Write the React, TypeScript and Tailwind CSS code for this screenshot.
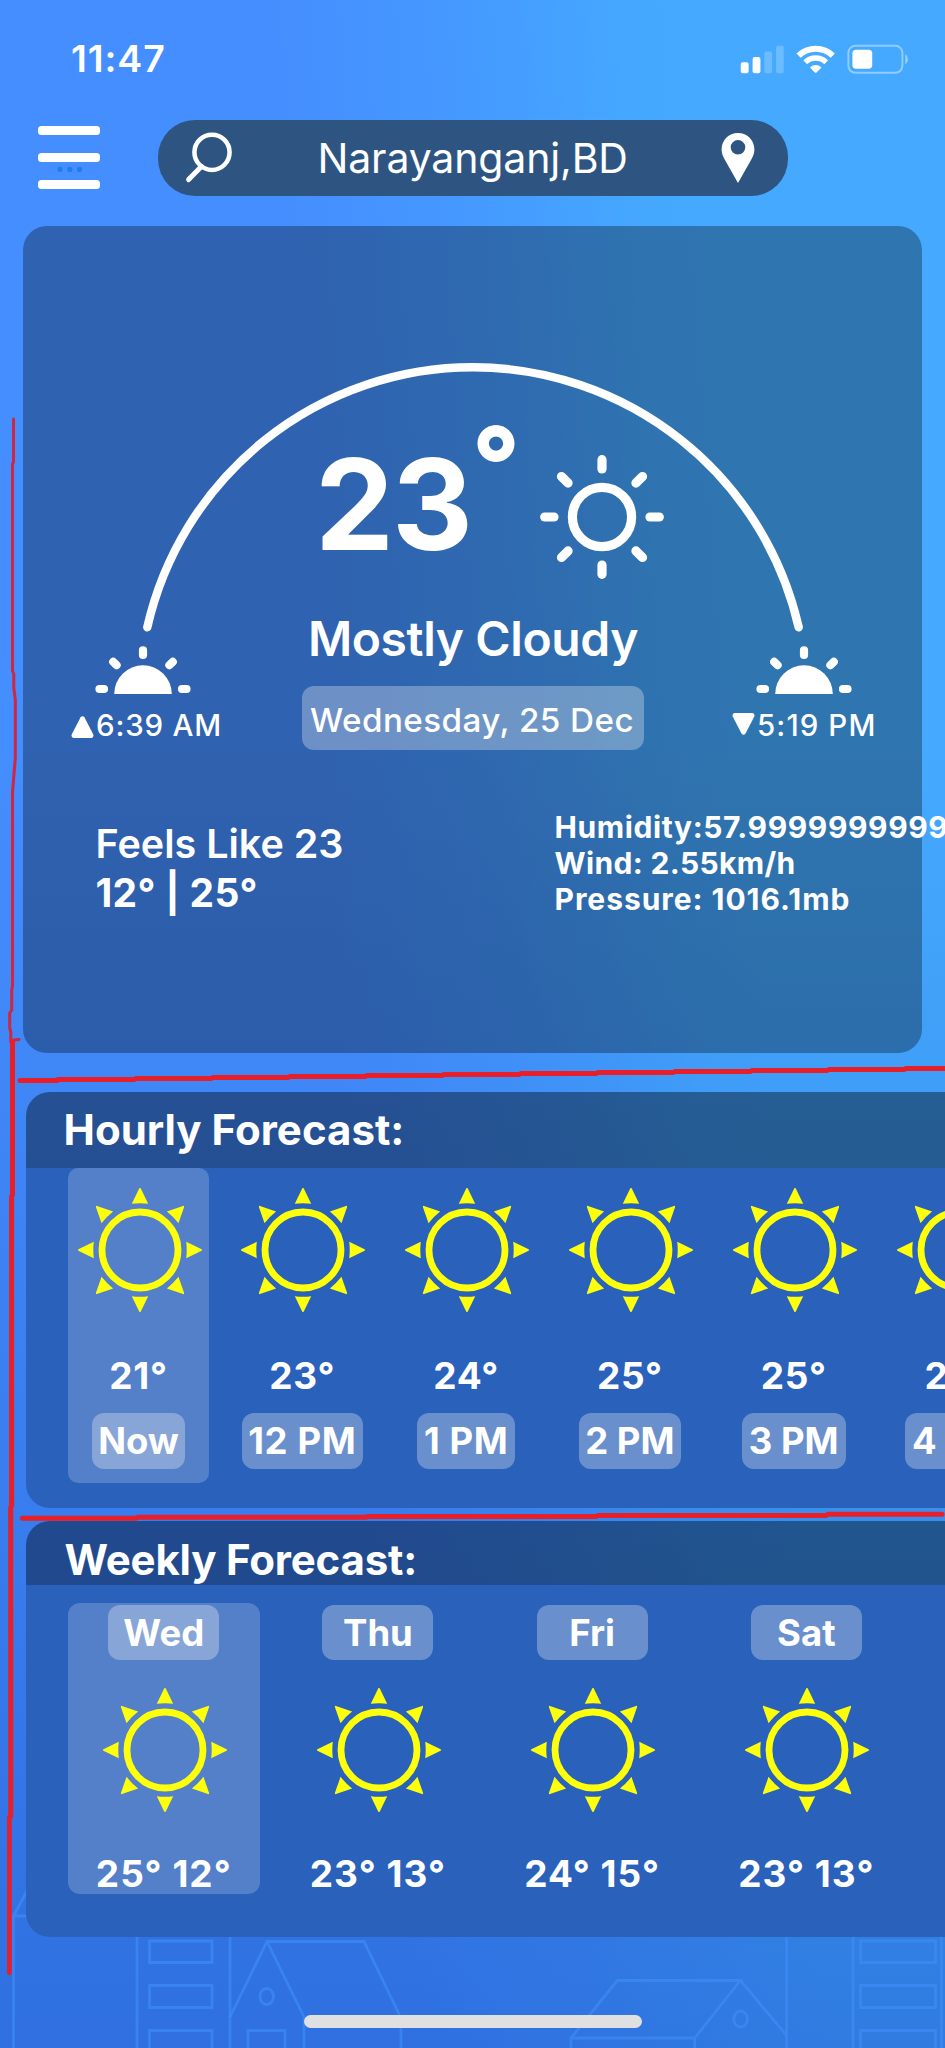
import React from "react";

const hours = [
  { temp: "21°", label: "Now", chip: "w-[93px]", active: true },
  { temp: "23°", label: "12 PM", chip: "w-[121px] tracking-[0.6px]" },
  { temp: "24°", label: "1 PM", chip: "w-[98px] tracking-[0.6px]" },
  { temp: "25°", label: "2 PM", chip: "w-[102px]" },
  { temp: "25°", label: "3 PM", chip: "w-[104px]" },
  { temp: "25°", label: "4 PM", chip: "w-[104px]" },
];

const days = [
  { day: "Wed", temps: "25° 12°", active: true },
  { day: "Thu", temps: "23° 13°" },
  { day: "Fri", temps: "24° 15°" },
  { day: "Sat", temps: "23° 13°" },
];

const ANGLES = [0, 45, 90, 135, 180, 225, 270, 315];

function SunIcon() {
  return (
    <svg className="h-[124px] w-[124px]" viewBox="-62 -62 124 124" fill="#fdff0b">
      <circle r="38" fill="none" stroke="#fdff0b" strokeWidth="6.800" />
      {ANGLES.map((a) => (
        <path key={a} d="M-.8 -61.6Q0 -62.6 .8 -61.6L8.2 -46.2Q0 -47.2 -8.2 -46.2Z" transform={`rotate(${a})`} />
      ))}
    </svg>
  );
}

function WeatherSun() {
  return (
    <svg className="h-[124px] w-[124px]" viewBox="-62 -62 124 124" fill="none" stroke="#fff" strokeWidth="9.2" strokeLinecap="round">
      <circle r="29.6" />
      {ANGLES.map((a) => (
        <path key={a} d="M0 -57.3V-48" transform={`rotate(${a})`} />
      ))}
    </svg>
  );
}

function HalfSun() {
  return (
    <svg className="h-[48px] w-[96px] shrink-0" viewBox="-48 -48 96 48" stroke="#fff" strokeWidth="8.2" strokeLinecap="round" fill="#fff">
      <path d="M-28.8 0A28.8 28.8 0 0 1 28.8 0Z" stroke="none" />
      <path d="M0 -43.6V-39M-43.5 -5H-39M43.5 -5H39M-29.8 -32.2L-26.4 -28.8M29.8 -32.2L26.4 -28.8" />
    </svg>
  );
}

function StatusBar() {
  return (
    <div className="flex h-[117px] items-center justify-between pl-[71px] pr-[36px]">
      <span className="text-[37.5px] leading-none font-semibold tracking-[0.9px]">11:47</span>
      <svg className="h-[30px] w-[170px]" viewBox="739 43 170 30" fill="#fff">
        <rect x="740.8" y="61.3" width="7.8" height="10.9" rx="2" />
        <rect x="752.6" y="56" width="7.8" height="16.2" rx="2" />
        <g opacity=".2">
          <rect x="764.3" y="50.6" width="7.8" height="21.6" rx="2" />
          <rect x="776" y="44.8" width="7.8" height="27.4" rx="2" />
        </g>
        <g fill="none" stroke="#fff">
          <path d="M798.6 54.6A24.8 24.8 0 0 1 832.8 54.6" strokeWidth="6" />
          <path d="M805.2 61.2A15.2 15.2 0 0 1 826.2 61.2" strokeWidth="5.4" />
        </g>
        <path d="M810 66.4A8.2 8.2 0 0 1 821.4 66.4L816.6 71.4Q815.7 72.2 814.8 71.4Z" />
        <rect x="848.4" y="44.8" width="54" height="27" rx="7" fill="none" stroke="#fff" strokeOpacity=".4" strokeWidth="2" />
        <rect x="852.4" y="48.7" width="19.8" height="19" rx="3.6" />
        <path d="M905.3 53A6.4 6.4 0 0 1 905.3 63.4Z" opacity=".45" />
      </svg>
    </div>
  );
}

function SearchRow() {
  return (
    <div className="mt-[3px] flex h-[76px] items-center pl-[38px]">
      <svg className="mb-[1.500px] h-[63px] w-[62px]" viewBox="0 0 62 63" fill="#fff">
        <rect y="0" width="62" height="9" rx="3.5" />
        <rect y="27" width="62" height="9" rx="3.5" />
        <rect y="54" width="62" height="9" rx="3.5" />
        <g fill="#1f7df2">
          <circle cx="22" cy="43.4" r="2.6" />
          <circle cx="31.8" cy="43.4" r="2.6" />
          <circle cx="41.6" cy="43.4" r="2.6" />
        </g>
      </svg>
      <div className="ml-[58px] flex h-[76px] w-[630px] items-center rounded-[37px] bg-[#2e5581]">
        <svg className="ml-[27px] h-[52px] w-[50px]" viewBox="185 132 50 52" fill="none" stroke="#fff" strokeLinecap="round">
          <circle cx="212" cy="152.3" r="17.6" strokeWidth="4.5" />
          <path d="M201.4 166.4L188.6 179.6" strokeWidth="5" />
        </svg>
        <span className="ml-[82.500px] w-[330px] whitespace-nowrap text-[41px] leading-none font-normal tracking-[-0.150px]">Narayanganj,BD</span>
        <svg className="ml-[73.500px] h-[50px] w-[34px] shrink-0" viewBox="0 0 34 50" fill="#fff" fillRule="evenodd">
          <path d="M17 0C7.600 0 .6 7.400 .6 16.400C.6 20 1.800 23 3.400 26L17 50L30.600 26C32.200 23 33.400 20 33.400 16.400C33.400 7.400 26.400 0 17 0ZM17 7A7.300 7.300 0 1 1 17 21.600A7.300 7.300 0 1 1 17 7Z" />
        </svg>
      </div>
    </div>
  );
}

function CurrentCard() {
  return (
    <div className="relative ml-[23px] mt-[30px] flex h-[827px] w-[899px] flex-col rounded-[24px] bg-black/31">
      <svg className="absolute left-0 top-0 h-[827px] w-[899px]" viewBox="23 226 899 827" fill="none" stroke="#fff">
        <path d="M147.300 627.300A334 334 0 0 1 798.700 627.300" strokeWidth="8.400" strokeLinecap="round" />
      </svg>

      <div className="mt-[199px] flex h-[155px] items-start pl-[292px]">
        <span className="mt-[33px] w-[155px] text-[125.500px] leading-[92px] font-bold tracking-[-2px]">23</span>
        <span className="mt-[-8px] w-[52px] text-center text-[104px] leading-[92px] font-extrabold">°</span>
        <div className="ml-[18px] mt-[29.700px]"><WeatherSun /></div>
      </div>

      <div className="relative mt-[30px] flex h-[141px] justify-between pl-[46px] pr-[43px]">
        <div className="flex w-[154px] flex-col items-center pt-[36px]">
          <div className="mr-[7px] flex"><HalfSun /></div>
          <div className="mt-[15px] flex w-full items-center leading-[32px]">
            <svg className="ml-[2px] mt-[3px] h-[22px] w-[23px]" viewBox="0 0 23 22" fill="#fff">
              <path d="M9.600 1.200Q11.500 -.6 13.400 1.200L22.300 18.600Q23 21.600 20.500 22H2.500Q0 21.600 .7 18.600Z" />
            </svg>
            <span className="ml-[2px] whitespace-nowrap text-[29.500px] font-medium tracking-[0.800px]">6:39 AM</span>
          </div>
        </div>
        <div className="mr-[8px] flex w-[342px] flex-col items-center">
          <span className="whitespace-nowrap text-[48px] leading-[58px] font-semibold tracking-[-0.400px]">Mostly Cloudy</span>
          <span className="mt-[18px] flex h-[64px] w-[342px] items-center justify-center whitespace-nowrap rounded-[12px] bg-[#fffdf8]/30 pr-[2px] pt-[5px] text-[33.200px] font-medium tracking-[0.450px]">Wednesday, 25 Dec</span>
        </div>
        <div className="flex w-[148px] flex-col items-center pt-[36px]">
          <div className="mr-[3px] flex"><HalfSun /></div>
          <div className="mt-[15px] flex w-full items-center leading-[32px]">
            <svg className="mb-[2px] ml-[1px] h-[22px] w-[23px]" viewBox="0 0 23 22" fill="#fff">
              <path d="M9.600 20.800Q11.500 22.600 13.400 20.800L22.300 3.400Q23 .4 20.500 0H2.500Q0 .4 .7 3.400Z" />
            </svg>
            <span className="ml-[2px] whitespace-nowrap text-[29.500px] font-medium tracking-[1.100px]">5:19 PM</span>
          </div>
        </div>
      </div>

      <div className="mt-[56px] flex justify-between pl-[72.500px] pr-[67.500px]">
        <div className="flex flex-col pt-[13px]">
          <span className="whitespace-nowrap text-[39.500px] leading-[49px] font-semibold">Feels Like 23</span>
          <span className="whitespace-nowrap text-[39px] leading-[48px] font-bold tracking-[0.300px]">12° | 25°</span>
        </div>
        <div className="flex w-[300px] flex-col whitespace-nowrap pt-[1.500px] text-[30px] leading-[36px] font-bold tracking-[0.600px]">
          <span>Humidity:57.99999999999999</span>
          <span className="tracking-[0.350px]">Wind: 2.55km/h</span>
          <span className="tracking-[0.950px]">Pressure: 1016.1mb</span>
        </div>
      </div>
    </div>
  );
}

function HourlyPanel() {
  return (
    <div className="ml-[25.500px] mt-[39px] h-[416px] w-[1100px] overflow-hidden rounded-[24px]">
      <div className="flex h-[76px] items-center bg-black/40 pl-[38px]">
        <span className="whitespace-nowrap text-[42px] leading-none font-bold">Hourly Forecast:</span>
      </div>
      <div className="flex h-[340px] gap-[22.800px] bg-[#2961bb] pl-[42.500px]">
        {hours.map((h, i) => (
          <div key={i} className={`flex h-[315px] w-[141px] shrink-0 flex-col items-center rounded-[10px] ${h.active ? "bg-white/20" : ""}`}>
            <div className="ml-[2.400px] mt-[20.300px] flex"><SunIcon /></div>
            <span className="mt-[42px] text-[37px] leading-[44px] font-bold tracking-[0.700px]">{h.temp}</span>
            <span className={`mt-[15px] flex h-[56px] items-center justify-center whitespace-nowrap rounded-[12px] bg-[#fffdf8]/30 text-[36.500px] font-bold ${h.chip}`}>{h.label}</span>
          </div>
        ))}
      </div>
    </div>
  );
}

function WeeklyPanel() {
  return (
    <div className="ml-[25.500px] mt-[13px] h-[415.600px] w-[1100px] overflow-hidden rounded-[24px]">
      <div className="flex h-[63.600px] items-center bg-black/40 pl-[39px] pt-[14px]">
        <span className="whitespace-nowrap text-[42px] leading-none font-bold tracking-[-0.200px]">Weekly Forecast:</span>
      </div>
      <div className="flex h-[352px] gap-[22.700px] bg-[#2961bb] pl-[42.500px] pt-[18px]">
        {days.map((d, i) => (
          <div key={i} className={`flex h-[291.500px] w-[191.500px] shrink-0 flex-col items-center rounded-[12px] ${d.active ? "bg-white/20" : ""}`}>
            <span className="mt-[2.500px] flex h-[55px] w-[111px] items-center justify-center rounded-[12px] bg-[#fffdf8]/30 pt-[1px] text-[36.500px] font-bold">{d.day}</span>
            <div className="ml-[2px] mt-[28px] flex"><SunIcon /></div>
            <span className="mt-[40px] whitespace-nowrap text-[37px] leading-[44px] font-bold tracking-[1px]">{d.temps}</span>
          </div>
        ))}
      </div>
    </div>
  );
}

function Skyline() {
  return (
    <svg className="absolute bottom-0 left-0 h-[188px] w-[945px]" viewBox="0 1860 945 188" fill="none" stroke="#3d8cf5" strokeOpacity=".7" strokeWidth="2.800">
      <path d="M13.500 2048V1916H26M13.500 1916L27 1891" />
      <path d="M137 1910V2048M230 1910V2048" />
      <path d="M149.500 1941H212V1962.500H149.500ZM149.500 1985.500H212V2007.500H149.500ZM149.500 2060V2030.500H212V2060" />
      <path d="M230 2017L267 1941.500H364L399.500 2015M267 1941.500L304 2017V2048M401 2015V2048M248 2060V2030.500H285V2060" />
      <ellipse cx="266.700" cy="1996.500" rx="6.800" ry="8" />
      <path d="M571 2048V2038L617.300 1980.500H740.500L694.700 2038H571M694.700 2038V2048M740.500 1980.500L786.700 2035.500M786.700 1910V2048" />
      <ellipse cx="740.600" cy="2019" rx="6.800" ry="8" />
      <path d="M853 1910V2048M941.500 1910V2048" />
      <path d="M860.500 1941H935.500V1962.500H860.500ZM860.500 1985.500H935.500V2007.500H860.500ZM860.500 2060V2030.500H935.500V2060" />
    </svg>
  );
}

function Markup() {
  return (
    <svg className="pointer-events-none absolute left-0 top-0 h-[2048px] w-[945px]" viewBox="0 0 945 2048" fill="none" stroke="#e81e28" strokeLinecap="round" strokeLinejoin="round">
      <path stroke="#d0263f" strokeWidth="3" d="M13.500 419V462L12.500 464V671L13.800 674V688L15.300 700V758L14 774L12.500 792V986L11.700 990V1010L9.700 1013V1028L10.800 1032V1042L14 1040L19 1039.500" />
      <path strokeWidth="5" strokeLinecap="butt" d="M12.500 1040V1196M11.600 1195V1507M10.700 1506V1818" />
      <path strokeWidth="4.600" d="M9.400 1817V1973" />
      <path strokeWidth="5" d="M20 1080.400H57M58 1079.500H134M136 1078.500H211M213 1077.600H288M290 1076.500H365M367 1075.500H442M444 1074.400H519M521 1073.500H596M598 1072.500H673M675 1071.500H750M752 1070.500H827M829 1069.500H904M906 1068.500H945" />
      <path strokeWidth="5" d="M22.500 1518.200H136M138 1517.300H366M368 1516.400H596M598 1515.400H826M828 1514.300H942" />
    </svg>
  );
}

export default function App() {
  return (
    <div className="relative h-[2048px] w-[945px] overflow-hidden bg-[linear-gradient(to_bottom,rgba(32,90,203,0)_36%,rgba(32,90,203,0.160)_54%,rgba(32,90,203,0.350)_75%,rgba(32,90,203,0.580)_100%),linear-gradient(86deg,#458eff_0%,#458eff_38%,#4599ff_55%,#45a7ff_70%,#45aaff_77%)] font-['Inter',sans-serif] text-white">
      <Skyline />
      <div className="relative flex flex-col">
        <StatusBar />
        <SearchRow />
        <CurrentCard />
        <HourlyPanel />
        <WeeklyPanel />
        <div className="ml-[304px] mt-[78.500px] h-[12.500px] w-[338px] rounded-full bg-[#e0e0e2]" />
      </div>
      <Markup />
    </div>
  );
}
